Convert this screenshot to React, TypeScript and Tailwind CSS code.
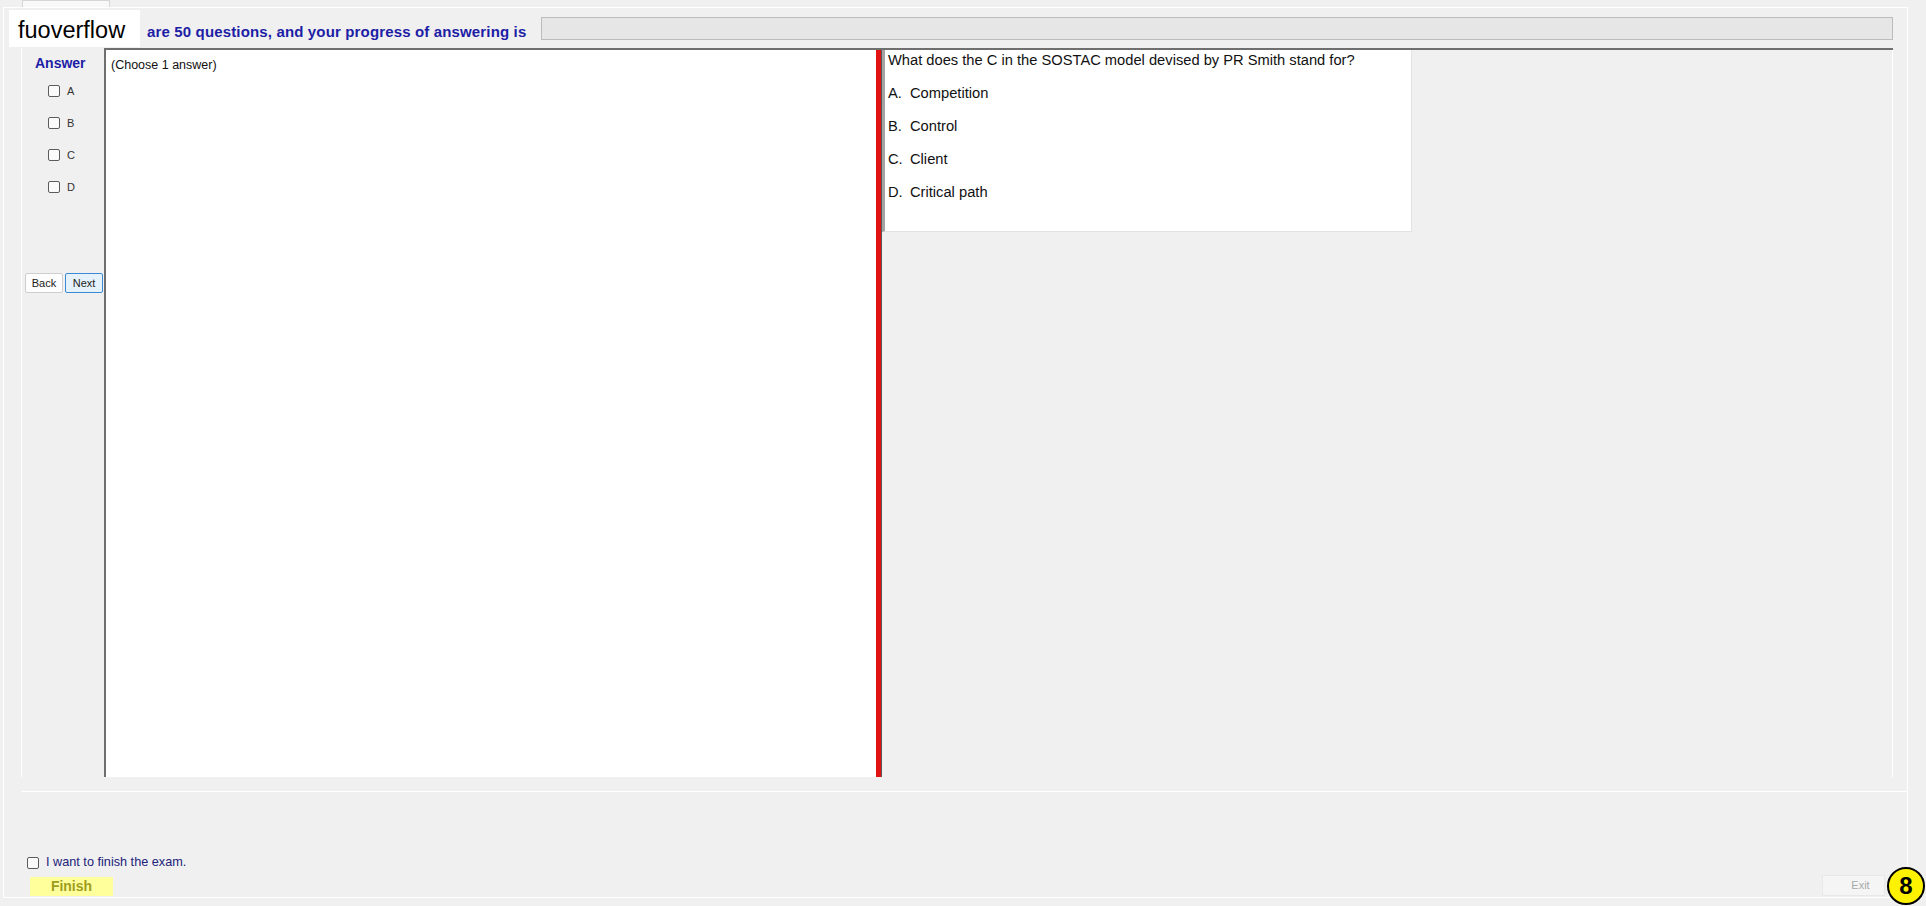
import React from 'react';

const font = { fontFamily: '"Liberation Sans", Arial, sans-serif' };

const Box: React.FC = () => (
  <span className="block w-[12px] h-[12px] rounded-[2px] border border-[#5c5c5c] bg-[#fbfbfb] shrink-0" />
);

const AnswerColumn: React.FC = () => (
  <div className="w-[83px] h-full border-l border-white flex flex-col">
    <span className="mt-[7px] pl-[13px] text-[14px] leading-[16px] font-bold text-[#1d1da6]">Answer</span>
    <div className="mt-[14px] ml-[26px] flex flex-col gap-[20px]">
      {['A', 'B', 'C', 'D'].map((l) => (
        <label key={l} className="flex items-center gap-[7px] h-[12px] text-[11px] text-[#333]">
          <Box />
          {l}
        </label>
      ))}
    </div>
    <div className="mt-[80px] ml-[3px] flex gap-[2px]">
      <button className="w-[38px] h-[20px] bg-[#fdfdfd] border border-[#cfcfcf] rounded-[2px] text-[11px] text-[#222]">Back</button>
      <button className="w-[38px] h-[20px] bg-[#e5f1fb] border border-[#3c8ad6] rounded-[2px] text-[11px] text-[#222]">Next</button>
    </div>
  </div>
);

const options = ['Competition', 'Control', 'Client', 'Critical path'];

const QuestionBox: React.FC = () => (
  <div className="w-[530px] h-[182px] bg-white border-l-[3px] border-[#a3a3a3] border-r border-b border-r-[#e2e2e2] border-b-[#e2e2e2] pl-[3px] pt-[1px] text-[14.7px] leading-[18px] text-[#111]">
    <p>What does the C in the SOSTAC model devised by PR Smith stand for?</p>
    <div className="mt-[15px] flex flex-col gap-[15px]">
      {options.map((o, i) => (
        <p key={o}>
          <span className="inline-block w-[22px]">{'ABCD'[i]}.</span>
          {o}
        </p>
      ))}
    </div>
  </div>
);

export default function App() {
  return (
    <div className="w-[1926px] h-[906px] bg-[#f0f0f0] relative overflow-hidden" style={font}>
      <div className="h-[7px] flex">
        <div className="ml-[22px] w-[88px] h-[7px] border border-b-0 border-[#d6d6d6] bg-[#f8f8f8]" />
      </div>

      <div className="ml-[3px] w-[1905px] h-[891px] border border-white flex flex-col">
        {/* header */}
        <div className="h-[40px] flex items-start shrink-0">
          <div className="ml-[5px] mt-[2px] w-[131px] h-[37px] bg-white pl-[9px] text-[23.5px] leading-[40px] text-black overflow-hidden">fuoverflow</div>
          <span className="ml-[7px] mt-[14px] text-[15px] leading-[20px] font-bold tracking-[0.15px] text-[#1d1da6] whitespace-nowrap">
            are 50 questions, and your progress of answering is
          </span>
          <div className="ml-auto mr-[14px] mt-[9px] w-[1352px] h-[23px] bg-[#e6e6e6] border border-[#bcbcbc]" />
        </div>

        {/* tab page */}
        <div className="ml-[17px] w-[1886px] h-[744px] shrink-0 border-b border-white flex flex-col">
          <div className="h-[729px] flex">
            <AnswerColumn />
            <div className="w-[1789px] h-full border-t-2 border-[#6f6f6f] flex">
              <div className="w-[772px] h-full bg-white border-l-2 border-[#6f6f6f] pl-[5px] pt-[8px] text-[12.5px] leading-[14px] text-[#111]">
                (Choose 1 answer)
              </div>
              <div className="w-[6px] h-full bg-[#e01212] border-r border-[#5a5a5a]" />
              <div className="flex-1 h-full border-r border-white">
                <QuestionBox />
              </div>
            </div>
          </div>
        </div>

        {/* footer */}
        <div className="flex-1 flex items-end justify-between pb-[1px]">
          <div className="ml-[23px] flex flex-col">
            <label className="flex items-center gap-[7px] h-[12px] text-[12.7px] text-[#22227a]">
              <Box />
              I want to finish the exam.
            </label>
            <button className="mt-[8px] ml-[3px] w-[83px] h-[19px] bg-[#ffff9c] text-[14px] leading-[19px] font-bold text-[#9d9d1c]">Finish</button>
          </div>
          <button className="mr-[22px] w-[63px] h-[21px] bg-[#f5f5f5] border border-[#e8e8e8] text-[11px] text-[#a8a8a8] pl-[14px]">Exit</button>
        </div>
      </div>

      <div className="absolute left-[1887px] top-[867px] w-[38px] h-[38px] rounded-full bg-[#fff200] border-2 border-black flex items-center justify-center text-[24px] font-bold text-black leading-none">
        8
      </div>
    </div>
  );
}
